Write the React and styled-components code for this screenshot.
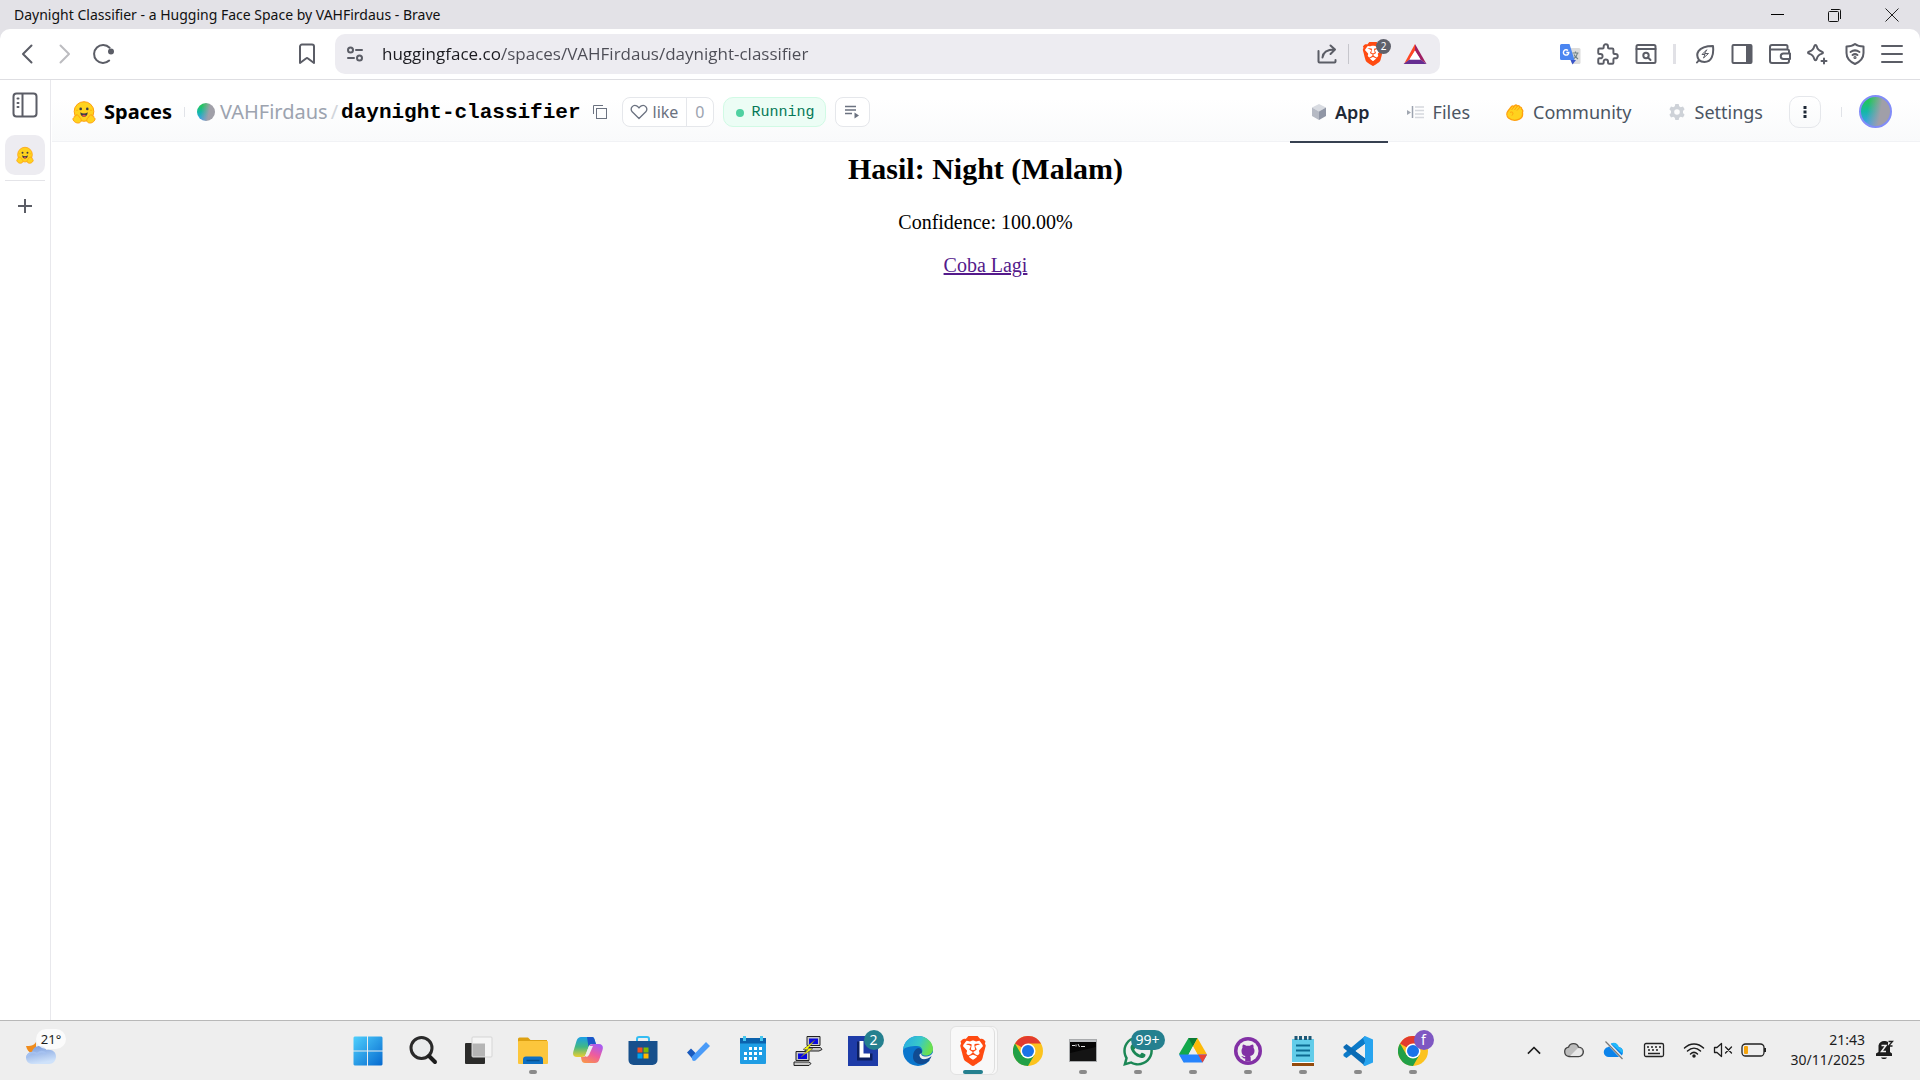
import React from 'react'
import styled, { createGlobalStyle, css } from 'styled-components'
import { SiBrave } from 'react-icons/si'
import { FaWhatsapp } from 'react-icons/fa'

const ui = `'Noto Sans', 'Open Sans', sans-serif`
const mono = `'Liberation Mono', monospace`

/* ---------- icons ---------- */

const Icon = ({ w, h = w, box, children, ...rest }) => (
  <svg
    width={w}
    height={h}
    viewBox={box || `0 0 ${w} ${h}`}
    fill='none'
    aria-hidden='true'
    {...rest}
  >
    {children}
  </svg>
)

const Line = ({ children, width = 2, ...rest }) => (
  <Icon
    stroke='currentColor'
    strokeWidth={width}
    strokeLinecap='round'
    strokeLinejoin='round'
    {...rest}
  >
    {children}
  </Icon>
)

const HuggingFace = ({ size }) => (
  <Icon w={size} box='0 0 24 24'>
    <circle cx='12' cy='11.5' r='9.8' fill='#ffd21e' stroke='#ff9d0b' />
    <path
      d='M1.2 20c-.7-1.2 0-2.2.9-2.3-.4-1.3.7-2.2 1.7-1.7 0-1.5 1.8-1.8 2.5-.4l1.9 2.4c1.8 1.6 1.3 4.5-1.5 5-2.3.3-4.4-.8-5.5-3z'
      fill='#ffd21e'
      stroke='#ff9d0b'
      strokeWidth='.9'
    />
    <path
      d='M22.8 20c.7-1.2 0-2.2-.9-2.3.4-1.3-.7-2.2-1.7-1.7 0-1.5-1.8-1.8-2.5-.4l-1.9 2.4c-1.8 1.6-1.3 4.5 1.5 5 2.3.3 4.4-.8 5.5-3z'
      fill='#ffd21e'
      stroke='#ff9d0b'
      strokeWidth='.9'
    />
    <circle cx='8.7' cy='8.9' r='1.3' fill='#3a3b45' />
    <circle cx='15.3' cy='8.9' r='1.3' fill='#3a3b45' />
    <circle cx='5' cy='10.3' r='.8' fill='#ffad03' />
    <circle cx='19' cy='10.3' r='.8' fill='#ffad03' />
    <path
      d='M8.3 12.3c2.3 1.7 5.1 1.7 7.4 0 0 3-1.5 4.4-3.7 4.4s-3.7-1.4-3.7-4.4z'
      fill='#3a3b45'
    />
    <path d='M10 15.6c1-1.3 3-1.3 4 0-1 1.4-3 1.4-4 0z' fill='#ef4e4e' />
  </Icon>
)

const Reload = () => (
  <Line w={24}>
    <path d='M18.2 18.6A9 9 0 1 1 18.6 5.8' />
    <circle cx='20' cy='9.5' r='2' fill='currentColor' />
  </Line>
)

const Bookmark = () => (
  <Line w={18} h={22}>
    <path d='M4 1.5h10a2 2 0 0 1 2 2V20l-6-4.500a1.5 1.5 0 0 0-2 0L2 20V3.500a2 2 0 0 1 2-2z' />
  </Line>
)

const SiteInfo = () => (
  <Line w={16}>
    <circle cx='3.5' cy='4' r='2.5' />
    <path d='M9 4h6M1 12h6' />
    <circle cx='12.5' cy='12' r='2.5' />
  </Line>
)

const Share = () => (
  <Line w={20}>
    <path d='M1.5 7v10.5a1 1 0 0 0 1 1h15a1 1 0 0 0 1-1V16' />
    <path d='M5.5 13.5c.5-5 4.500-8 12-8M13.5 1.5l4.5 4-4.5 4.5' />
  </Line>
)

const BraveLion = ({ size }) => (
  <Icon w={size} box='0 0 24 24'>
    <path d='M7 3h10l4 4-2 10-7 5-7-5L3 7z' fill='#fff' />
    <SiBrave size={24} color='#ff4b12' />
  </Icon>
)

const BatTriangle = () => (
  <Icon w={24} h={20}>
    <path d='M12 0v7l-5.5 8.5L1 20z' fill='#ff4724' />
    <path d='M12 0l11.5 20-6-4.5L12 7z' fill='#9e1f63' />
    <path d='M.5 20l6-4.5h11l6 4.5z' fill='#662d91' />
    <path d='M12 6.5l5.5 9h-11z' fill='#fff' />
  </Icon>
)

const Translate = () => (
  <Icon w={22}>
    <path d='M8 5h12a1.5 1.5 0 0 1 1.5 1.5v13A1.5 1.5 0 0 1 20 21h-7z' fill='#dcdcdc' />
    <path d='M11.5 17l2 4.5L17 17z' fill='#3a55c8' />
    <path
      d='M2.5 1h8l5 16h-13A1.5 1.5 0 0 1 1 15.500v-13A1.5 1.5 0 0 1 2.5 1z'
      fill='#4b86f1'
    />
    <path d='M9 7.500a2.700 2.700 0 1 0 .8 2H7.3' stroke='#fff' strokeWidth='1.4' />
    <path
      d='M13.5 10h6M16.5 8.500V10M18.5 10c-.5 3-2 4.5-3.5 5.5M15 11.500c1 2.500 2.500 3.500 4 4.500'
      stroke='#6f8286'
      strokeWidth='1.2'
    />
  </Icon>
)

const Puzzle = () => (
  <Line w={26} box='0 0 24 24' width='1.8'>
    <path d='M4 7h3a1 1 0 0 0 1-1V5a2 2 0 0 1 4 0v1a1 1 0 0 0 1 1h3a1 1 0 0 1 1 1v3a1 1 0 0 0 1 1h1a2 2 0 0 1 0 4h-1a1 1 0 0 0-1 1v3a1 1 0 0 1-1 1h-3a1 1 0 0 1-1-1v-1a2 2 0 0 0-4 0v1a1 1 0 0 1-1 1H4a1 1 0 0 1-1-1v-3a1 1 0 0 1 1-1h1a2 2 0 0 0 0-4H4a1 1 0 0 1-1-1V8a1 1 0 0 1 1-1' />
  </Line>
)

const PageSearch = () => (
  <Line w={22} h={20}>
    <rect x='1.5' y='1' width='19' height='18' rx='1.5' />
    <path d='M1.5 5h19M13 13.5l2.5 2.5' />
    <circle cx='11' cy='11.5' r='2.7' />
  </Line>
)

const Leaf = () => (
  <Line w={20}>
    <path d='M2 18.5L4 16C.5 11 1.500 2 18 2c1 9-1.5 16-8.5 16-2.500 0-4-.5-5.500-2z' />
    <path d='M11.5 6L7 10.500h3L8.500 14l5-4.500H10z' strokeWidth='1' />
  </Line>
)

const PanelRight = () => (
  <Icon w={22} h={20}>
    <rect x='1.5' y='1' width='19' height='18' rx='1' stroke='currentColor' strokeWidth='2' />
    <path d='M15 1h6v18h-6z' fill='currentColor' />
  </Icon>
)

const Wallet = () => (
  <Line w={22} h={20}>
    <path d='M18.5 4V2.500A1.500 1.500 0 0 0 17 1H3a2 2 0 0 0-2 2v14a2 2 0 0 0 2 2h15a2 2 0 0 0 2-2V7a1.500 1.500 0 0 0-1.500-1.500H1' />
    <path d='M21 9.500h-6.500a2.500 2.500 0 0 0 0 5.500H21z' fill='#fff' />
  </Line>
)

const Sparkle = () => (
  <Line w={22}>
    <path d='M9.5 2c.5 0 1 .5 1.2 1.3.8 3 1.6 4.300 4.800 5.200 2 .6 2 1.800 0 2.400-3.200.9-4 2.200-4.800 5.200-.4 1.600-2 1.600-2.400 0-.8-3-1.600-4.300-4.800-5.200-2-.6-2-1.800 0-2.400 3.200-.9 4-2.200 4.800-5.200C8.500 2.500 9 2 9.500 2z' />
    <path d='M18 15.500v5M15.500 18h5' />
  </Line>
)

const ShieldWifi = () => (
  <Line w={20} h={22}>
    <path d='M10 1c2.500 2 5 2.500 8.500 2.500V10c0 5-3 8.500-8.500 11C4.500 18.500 1.500 15 1.500 10V3.500C5 3.500 7.500 3 10 1z' />
    <path d='M5.500 9c2.800-2 6.200-2 9 0M7.500 12c1.700-1.200 3.300-1.200 5 0' />
    <circle cx='10' cy='14.5' r='.6' />
  </Line>
)

const SidebarToggle = () => (
  <Line w={26}>
    <rect x='1.5' y='1.5' width='23' height='23' rx='3' />
    <path d='M10.5 2v22M5.5 6.500h1M5.500 11h1M5.500 15h1' />
  </Line>
)

const Copy = () => (
  <Icon w={14} stroke='#6b7280'>
    <path d='M.5 9V.5H10' />
    <rect x='3.5' y='3.5' width='10' height='10' />
  </Icon>
)

const Heart = () => (
  <Line w={18} h={16} width='1.3'>
    <path d='M9 14.500L2.200 7.800C-.5 4.500 3 .2 6.700 1.800 7.800 2.300 8.400 3 9 4c.6-1 1.200-1.700 2.300-2.200C15 .2 18.500 4.500 15.800 7.800z' />
  </Line>
)

const ListPlay = () => (
  <Icon w={14}>
    <path d='M0 1.500h11M0 5h11M0 8.500h7' stroke='#6b7280' strokeWidth='1.5' />
    <path d='M9.500 7.500l4.500 3-4.500 3z' fill='#6b7280' />
  </Icon>
)

const Cube = () => (
  <Icon w={18}>
    <path d='M11 1l7 3.500-7 4-7-4z' fill='#d8dbe1' />
    <path d='M4 4.500l7 4V17l-7-4z' fill='#b6bac4' />
    <path d='M18 4.500l-7 4V17l7-4z' fill='#9096a5' />
  </Icon>
)

const FilesIcon = () => (
  <Icon w={18} h={14}>
    <path d='M1 5l4 2.500-4 2.500z' fill='#a0a6b0' />
    <path d='M6.500 1v12' stroke='#9ca3af' strokeWidth='1.5' />
    <path d='M9 2h9M9 5.500h9M9 9h9M9 12.500h9' stroke='#d5d8dd' strokeWidth='1.5' />
  </Icon>
)

const Clap = () => (
  <Icon w={18}>
    <path
      d='M2.500 15C.5 13 .3 10 2 8l3.500-4.500c1-1 2.200-.5 2.300.3l1-1.300c1.200-1 2.500-.3 2.400.7 1.200-1 2.700-.3 2.500 1.100 1.300-.4 2.300.6 1.800 1.900 1.400.5 1.600 2 .9 3.300.7 3.500-.3 5.500-3 6.700-3.500 1.500-8 1.300-10.900-1.200z'
      fill='#ffd21e'
      stroke='#ffa00f'
      strokeWidth='1.3'
    />
    <path
      d='M7.800 4L5.500 7M11 3.500L8.500 7M13.500 4.500L11 7.500M4 9.500c2.500-1.500 4 .5 2 3'
      stroke='#ffa00f'
    />
  </Icon>
)

const Gear = () => (
  <Icon w={18}>
    <path
      fillRule='evenodd'
      d='M7.300 1h3.400l.5 2.300 1.500.9L15 3.500l1.600 2.800L15 8v2l1.600 1.700L15 14.500l-2.300-.7-1.500.9-.5 2.300H7.300l-.5-2.300-1.500-.9-2.300.7-1.600-2.800L3 10V8L1.400 6.300 3 3.500l2.300.7 1.500-.9zM9 6.200a2.800 2.800 0 1 0 0 5.600 2.800 2.800 0 0 0 0-5.600z'
      fill='#ced2d8'
    />
  </Icon>
)

/* taskbar icons, all on a 30px grid */

const Windows = () => (
  <Icon w={30}>
    <defs>
      <linearGradient id='win' x1='0' y1='0' x2='1' y2='1'>
        <stop stopColor='#4fd0fd' />
        <stop offset='1' stopColor='#0669cf' />
      </linearGradient>
    </defs>
    <path
      d='M1.500.5H14v14H.5v-13zM15 .5h13.500l1 1v13H15zM.5 15.500H14v14H1.500l-1-1zM15 15.500h14.500v13l-1 1H15z'
      fill='url(#win)'
    />
  </Icon>
)

const Search = () => (
  <Icon w={30}>
    <circle cx='13.5' cy='12' r='10.5' stroke='#2a2a2a' strokeWidth='3' fill='#e9ebec' />
    <path d='M21 20l6 6' stroke='#1d1d1d' strokeWidth='4' strokeLinecap='round' />
  </Icon>
)

const TaskView = () => (
  <Icon w={30}>
    <rect x='2' y='7' width='20' height='21' rx='1' fill='#2b2b2a' />
    <rect x='9' y='1' width='20' height='20' rx='1' fill='#f5f5f5' stroke='#d5d5d5' />
    <path d='M9.500 7.500H22v13H9.500z' fill='#b5b5b5' />
  </Icon>
)

const Explorer = () => (
  <Icon w={30}>
    <path d='M0 3a1.500 1.500 0 0 1 1.500-1.500H10L12.500 4H29v8H0z' fill='#dda112' />
    <rect y='5' width='30' height='23' rx='1' fill='#fcc63c' />
    <path d='M5 28v-4.500a3 3 0 0 1 3-3h14a3 3 0 0 1 3 3V28z' fill='#0e70c4' />
    <path d='M8.500 24.500h13' stroke='#07508f' strokeWidth='1.5' />
  </Icon>
)

const Copilot = () => (
  <Icon w={30}>
    <defs>
      <linearGradient id='cop1' x1='0' y1='0' x2='0' y2='1'>
        <stop stopColor='#1a9fe8' />
        <stop offset='.5' stopColor='#42b883' />
        <stop offset='1' stopColor='#ecce31' />
      </linearGradient>
      <linearGradient id='cop2' x1='.7' y1='0' x2='.2' y2='1'>
        <stop stopColor='#a95cf0' />
        <stop offset='.5' stopColor='#ef5c9d' />
        <stop offset='1' stopColor='#f9954b' />
      </linearGradient>
    </defs>
    <path
      d='M8 1h11c2 0 2.500 2 3 4l1 3h-4c-2 0-3 1-3.500 3L13 18c-.6 2-1.800 3-4 3H4c-4 0-4.500-3-3.500-6l3-10C4.500 2 6 1 8 1z'
      fill='url(#cop1)'
    />
    <path d='M14 1h5c2 0 2.500 2 3 4l1 3h-4c-2 0-3 1-3.500 3z' fill='#1b56c9' />
    <path
      d='M22 27H12c-2 0-3-1-3.500-3L8 21h2c2 0 3-1 3.500-3L16 11c.6-2 2-3 4-3h6c3.500 0 4.500 3 3.500 6l-3 9c-1 3-2.500 4-4.500 4z'
      fill='url(#cop2)'
    />
    <path d='M12 20l4-10h4l-4 9-2 2z' fill='#eee' />
  </Icon>
)

const Store = () => (
  <Icon w={30}>
    <path d='M9 6V3a2 2 0 0 1 2-2h8a2 2 0 0 1 2 2v3' stroke='#35bdf2' strokeWidth='2' />
    <path d='M.5 5h29v19a5 5 0 0 1-5 5h-19a5 5 0 0 1-5-5z' fill='#17508c' />
    <path d='M9.500 11.500h5v5h-5z' fill='#f25022' />
    <path d='M15.500 11.500h5v5h-5z' fill='#7fba00' />
    <path d='M9.500 17.500h5v5h-5z' fill='#00a4ef' />
    <path d='M15.500 17.500h5v5h-5z' fill='#ffb900' />
  </Icon>
)

const Todo = () => (
  <Icon w={30}>
    <path d='M4 16.500l4-4 7 7-4.500 4.500z' fill='#195abd' />
    <path d='M8.500 21L23 6l4 4-14.500 14.500c-1 .5-2 .5-3 0z' fill='#4a9bf8' />
  </Icon>
)

const Calendar = () => (
  <Icon w={30}>
    <rect x='2' y='2' width='26' height='26' rx='1' fill='#1f9de4' />
    <path d='M2 2h26v5.500H2z' fill='#0b62ad' />
    <path d='M6.500 0v5M23.500 0v5' stroke='#45c6ef' strokeWidth='3' />
    <path
      d='M11 12.500h13M6 17.500h18M6 22.500h13'
      stroke='#fff'
      strokeWidth='3'
      strokeDasharray='3 2'
    />
  </Icon>
)

const Putty = () => (
  <Icon w={30}>
    <g stroke='#222'>
      <path d='M14 .5h13v9H14zM12.500 11.500h15l1.500 2-3 1.500H12z' fill='#c7c7c7' />
      <path d='M3 15.500h13v9H3zM1 26h15l2 1.500-2 2H1z' fill='#c7c7c7' />
    </g>
    <path d='M16 2.500h9V8h-9zM5 17.500h9V23H5z' fill='#0a0ae0' />
    <path
      d='M22 4L10 13.500h5L8 21l12-8.500h-5z'
      fill='#ff0'
      stroke='#555'
      strokeWidth='.6'
    />
  </Icon>
)

const LApp = () => (
  <Icon w={30}>
    <path d='M0 0h30v30H0z' fill='#1e3ca8' />
    <path d='M12 5.500v16h9.500v-4' stroke='#0c1f60' strokeWidth='6' />
    <path d='M13.500 5v14.500H22' stroke='#fff' strokeWidth='4' />
  </Icon>
)

const Edge = () => (
  <Icon w={30}>
    <defs>
      <linearGradient id='edge1' x1='0' y1='0' x2='1' y2='.3'>
        <stop stopColor='#26a8e6' />
        <stop offset='.6' stopColor='#38c9c9' />
        <stop offset='1' stopColor='#6be04f' />
      </linearGradient>
    </defs>
    <circle cx='15' cy='15' r='15' fill='#0b76cd' />
    <path
      d='M0 14C1 5 7 0 15 0c8.500 0 15 6 15 13 0 4-3 6.500-7 6.500-3.500 0-5-1.500-4-3 1.500-3-1-6.500-5-6.500C7.500 10 2 11 0 14z'
      fill='url(#edge1)'
    />
    <path
      d='M10 21c0-6 3.500-9 6-9 2.500 1 3.500 3 2.500 5-1 2 1 3.500 4.500 3.500 2 0 4-.5 5.500-1.500.5 1-1 4-3 6-6 6-15.500 3-15.500-4z'
      fill='#114b92'
    />
    <path
      d='M18.500 17c-1 2 1 3.500 4.500 3.500 3 0 5.500-1.500 7-4V24h-5c-6 1-9-3-8.500-5.500z'
      fill='#eee'
    />
    <path d='M28.500 20c-.5 2-2 4-3.500 5.500-4 2-11-1-9-5 1.500 4 8 3.500 12.500-.5z' fill='#114b92' />
  </Icon>
)

const Chrome = () => (
  <Icon w={30}>
    <circle cx='15' cy='15' r='15' fill='#fcc31e' />
    <path d='M15 15L2 7.500A15 15 0 0 1 28 7.500z' fill='#e33b2e' />
    <path d='M15 7.500h13L21.500 15z' fill='#fcc31e' />
    <path d='M2 7.500A15 15 0 0 0 15 30l6.500-11.200h-13z' fill='#21a047' />
    <circle cx='15' cy='15' r='7.5' fill='#fff' />
    <circle cx='15' cy='15' r='6' fill='#1a73e8' />
  </Icon>
)

const Terminal = () => (
  <Icon w={30}>
    <rect x='1.5' y='3.5' width='27' height='22' fill='#060606' stroke='#a9abad' />
    <path d='M2 4h26v2H2z' fill='#bfc2c5' />
    <path d='M4 9.500h3M8 8.500v2M10 8l1.500 3M13 10.500h4' stroke='#ddd' />
    <path d='M2 17l26-6v14H2z' fill='#222' opacity='.5' />
  </Icon>
)

const Drive = () => (
  <Icon w={30}>
    <path d='M10.500 2h9L15 10 6.500 26.500 1 18z' fill='#12a84b' />
    <path d='M10.500 2h9L15 10.500z' fill='#0b7a35' />
    <path d='M19.500 2L29 18.500h-9.500L15 10.500z' fill='#fdba08' />
    <path d='M15 10.500l4.500 8h-9z' fill='#eee' />
    <path d='M1 18.500h28l-4.500 8h-19z' fill='#2684fc' />
    <path d='M20 18.500h9l-4.500 8z' fill='#ea4335' />
  </Icon>
)

const GithubDesktop = () => (
  <Icon w={30}>
    <circle cx='15' cy='15' r='14' fill='#8230a5' />
    <circle cx='15' cy='15' r='10.5' fill='#eee' />
    <path
      d='M8.500 15c0-1.500.4-2.500 1-3.300-.2-1.200 0-2.500.5-3.200 1.500.1 2.500.8 3 1.200h4c.5-.4 1.500-1.100 3-1.200.5.7.7 2 .5 3.200.6.8 1 1.800 1 3.300 0 3-2 4.500-4.500 5 .7.6.8 1.500.8 5.500h-5.600v-3c-2.500.5-2.500-1.500-4-2.500 2-.3 2 1.200 4 1v-1C10 19.500 8.500 18 8.500 15z'
      fill='#8230a5'
    />
  </Icon>
)

const Notepad = () => (
  <Icon w={30}>
    <path d='M4 27h22v3H4z' fill='#944a0c' />
    <path d='M4 25h22v2H4z' fill='#fff' />
    <path d='M4 3h22v23H4z' fill='#62cce9' />
    <path d='M8 9.500h14M8 14.500h14M8 19.500h14' stroke='#0c6a92' strokeWidth='2' />
    <path d='M8 0v4M12.500 0v4M17.500 0v4M22 0v4' stroke='#1e5876' strokeWidth='3' />
  </Icon>
)

const VsCode = () => (
  <Icon w={30}>
    <path d='M22 8L3.500 22 .5 20v-2L22 0z' fill='#0b7ac8' />
    <path d='M22 22L3.500 8l-3 2.500V12L22 30z' fill='#0a6bb5' />
    <path d='M22 0l8 3.500v23L22 30l-2-1 2-4V7.500L20 2z' fill='#27a4ef' />
    <path d='M22 8v14l-9.500-7z' fill='#eee' />
  </Icon>
)

const Weather = () => (
  <Icon w={34} h={30}>
    <defs>
      <linearGradient id='cloud' x1='0' y1='0' x2='.3' y2='1'>
        <stop stopColor='#7397db' />
        <stop offset='1' stopColor='#cfe2fa' />
      </linearGradient>
    </defs>
    <path d='M1 8c4 0 8 0 10-4v11H6c-2-1-4-3-5-7z' fill='#f08c1c' />
    <path
      d='M7 26a6 6 0 0 1 0-12c1-4 4-6 8-6 3 0 5 1.500 6.500 4C27 11 31 14 31 18.500c0 4.500-3 7.500-7 7.500z'
      fill='url(#cloud)'
    />
    <path d='M2 20a6 6 0 0 1 10-4c3-3 7-3 9 0' stroke='#a5c1f0' strokeWidth='2' />
  </Icon>
)

const Chevron = () => (
  <Line w={16} h={10} width='1.7' strokeLinecap='square'>
    <path d='M2.500 8L8 2.500 13.500 8' />
  </Line>
)

const Cloud = () => (
  <Icon w={22} h={16}>
    <path
      d='M6 14.500a4.700 4.700 0 0 1-.5-9.300C7 .5 14 .3 15.500 5.200c6.500 0 6.500 9.300 0 9.300z'
      fill='#bdbdbd'
      stroke='#444'
      strokeWidth='1.3'
    />
    <path d='M7 14l8-8c5.500.5 5.500 8 0 8z' fill='#e8e8e8' />
  </Icon>
)

const OneDrive = () => (
  <Icon w={22} h={20}>
    <path d='M6 17a5 5 0 0 1-.5-10C7 1.500 14 1.500 15.500 7c6 0 6 10 0 10z' fill='#0c83ea' />
    <path d='M8 3.500c3-2 7-.5 8 4 4 .5 4.500 4 3.500 6z' fill='#22b8fa' />
    <path d='M3 1l17 18' stroke='#eee' strokeWidth='3' />
    <path d='M2.500 1.500L19.500 19' stroke='#777' strokeWidth='1.2' />
  </Icon>
)

const Keyboard = () => (
  <Icon w={22} h={16} stroke='#222'>
    <rect x='1.5' y='1.5' width='19' height='13' rx='1.5' strokeWidth='1.3' />
    <path d='M4 5h14M5 8h12' strokeWidth='1.5' strokeDasharray='2 2' />
    <path d='M5 11.500h12' strokeWidth='1.5' />
  </Icon>
)

const Wifi = () => (
  <Line w={22} h={16} width='1.5'>
    <path d='M1.500 6c5.500-5.500 13.500-5.500 19 0M4.500 9c4-3.700 9-3.700 13 0M7.500 12c2.200-2 4.800-2 7 0' />
    <circle cx='11' cy='14' r='1' fill='currentColor' />
  </Line>
)

const Muted = () => (
  <Line w={20} h={16} width='1.3'>
    <path d='M1.500 5.500H4l4.500-4v13L4 10.500H1.500zM12.500 5l6 6M18.500 5l-6 6' />
  </Line>
)

const Battery = () => (
  <Icon w={26} h={14}>
    <rect x='1' y='1' width='22' height='12' rx='3.5' stroke='#222' strokeWidth='1.3' />
    <rect x='3' y='3' width='4' height='8' rx='1' fill='#f5a40c' />
    <path d='M24 5v4' stroke='#222' strokeWidth='2' />
  </Icon>
)

const Bell = () => (
  <Icon w={20}>
    <path
      d='M3.500 5.500C4 2.500 6.500 1 9 1c1.500 0 3 .3 4 1v4h2v6l2 1.500V16H1v-2.500L3.500 12zM6 17.500h6c-1 2-5 2-6 0z'
      fill='#1d1d1d'
    />
    <path d='M6.500 5.500H11l-4.500 6H11' stroke='#eee' strokeWidth='1.5' />
    <path d='M13.500 1.500h4L13.500 6h4' stroke='#1d1d1d' strokeWidth='1.3' />
  </Icon>
)

/* ---------- data ---------- */

const tabs = [
  { label: 'App', icon: <Cube />, active: true },
  { label: 'Files', icon: <FilesIcon /> },
  { label: 'Community', icon: <Clap /> },
  { label: 'Settings', icon: <Gear /> },
]

const tools = [
  { label: 'Energy saver', icon: <Leaf /> },
  { label: 'Side panel', icon: <PanelRight /> },
  { label: 'Wallet', icon: <Wallet /> },
  { label: 'Leo AI', icon: <Sparkle /> },
  { label: 'VPN', icon: <ShieldWifi /> },
  {
    label: 'Menu',
    icon: (
      <Line w={22} h={20}>
        <path d='M1 2h20M1 10h20M1 18h20' />
      </Line>
    ),
  },
]

const apps = [
  { label: 'Start', icon: <Windows /> },
  { label: 'Search', icon: <Search /> },
  { label: 'Task view', icon: <TaskView /> },
  { label: 'File Explorer', icon: <Explorer />, running: true },
  { label: 'Copilot', icon: <Copilot /> },
  { label: 'Store', icon: <Store /> },
  { label: 'To Do', icon: <Todo /> },
  { label: 'Calendar', icon: <Calendar /> },
  { label: 'PuTTY', icon: <Putty /> },
  { label: 'L', icon: <LApp />, badge: '2' },
  { label: 'Edge', icon: <Edge /> },
  { label: 'Brave', icon: <BraveLion size={30} />, running: true, active: true },
  { label: 'Chrome', icon: <Chrome /> },
  { label: 'Terminal', icon: <Terminal />, running: true },
  {
    label: 'WhatsApp',
    icon: <FaWhatsapp size={34} color='#1b8755' />,
    running: true,
    badge: '99+',
  },
  { label: 'Google Drive', icon: <Drive />, running: true },
  { label: 'GitHub Desktop', icon: <GithubDesktop />, running: true },
  { label: 'Notepad', icon: <Notepad />, running: true },
  { label: 'VS Code', icon: <VsCode />, running: true },
  { label: 'Chrome profile', icon: <Chrome />, running: true, badge: 'f', purple: true },
]

/* ---------- sections ---------- */

const Browser = () => (
  <>
    <TitleBar>
      <WindowTitle>
        Daynight Classifier - a Hugging Face Space by VAHFirdaus - Brave
      </WindowTitle>
      <WindowButton aria-label='Minimize'>
        <Icon w={14} stroke='#000'>
          <path d='M0 6.500h13' />
        </Icon>
      </WindowButton>
      <WindowButton aria-label='Restore'>
        <Icon w={14} stroke='#111'>
          <rect x='.5' y='3.5' width='10' height='10' rx='1' />
          <path d='M3 1.500h8.500a1 1 0 0 1 1 1V11' />
        </Icon>
      </WindowButton>
      <WindowButton aria-label='Close'>
        <Icon w={14} stroke='#222'>
          <path d='M.5.5l13 13M13.500.5l-13 13' />
        </Icon>
      </WindowButton>
    </TitleBar>
    <ToolbarBack>
      <Toolbar>
        <ToolButton aria-label='Back'>
          <Line w={12} h={20}>
            <path d='M10.500 1.500L2 10l8.500 8.500' />
          </Line>
        </ToolButton>
        <ToolButton aria-label='Forward' disabled>
          <Line w={12} h={20}>
            <path d='M1.500 1.500L10 10l-8.500 8.500' />
          </Line>
        </ToolButton>
        <ToolButton aria-label='Reload'>
          <Reload />
        </ToolButton>
        <BookmarkButton aria-label='Bookmark'>
          <Bookmark />
        </BookmarkButton>
        <AddressBar>
          <ToolButton aria-label='Site information'>
            <SiteInfo />
          </ToolButton>
          <AddressInput
            type='text'
            aria-label='Address'
            defaultValue='huggingface.co/spaces/VAHFirdaus/daynight-classifier'
          />
          <ToolButton aria-label='Share'>
            <Share />
          </ToolButton>
          <Separator />
          <ShieldButton aria-label='Brave Shields'>
            <BraveLion size={24} />
            <ShieldCount>2</ShieldCount>
          </ShieldButton>
          <ToolButton aria-label='Rewards'>
            <BatTriangle />
          </ToolButton>
        </AddressBar>
        <Extensions>
          <ToolButton aria-label='Translate'>
            <Translate />
          </ToolButton>
          <ToolButton aria-label='Extensions'>
            <Puzzle />
          </ToolButton>
          <ToolButton aria-label='Find in page'>
            <PageSearch />
          </ToolButton>
        </Extensions>
        <Separator $thick />
        <Tools>
          {tools.map(tool => (
            <ToolButton key={tool.label} aria-label={tool.label}>
              {tool.icon}
            </ToolButton>
          ))}
        </Tools>
      </Toolbar>
    </ToolbarBack>
  </>
)

const SpaceHeader = () => (
  <Header>
    <HomeLink href='#spaces'>
      <HuggingFace size={24} />
      Spaces
    </HomeLink>
    <Divider />
    <Avatar />
    <OwnerLink href='#owner'>VAHFirdaus</OwnerLink>
    <Slash>/</Slash>
    <RepoLink href='#repo'>daynight-classifier</RepoLink>
    <CopyButton aria-label='Copy name'>
      <Copy />
    </CopyButton>
    <LikeGroup>
      <LikeButton>
        <Heart />
        like
      </LikeButton>
      <LikeCount>0</LikeCount>
    </LikeGroup>
    <Status>Running</Status>
    <ListButton aria-label='Add to collection'>
      <ListPlay />
    </ListButton>
    <Tabs>
      {tabs.map(tab => (
        <Tab key={tab.label} href={`#${tab.label}`} $active={tab.active}>
          {tab.icon}
          {tab.label}
        </Tab>
      ))}
    </Tabs>
    <MoreButton aria-label='More'>
      <Icon w={4} h={14}>
        <path d='M.5 1h3v3h-3zM.5 5.500h3v3h-3zM.5 10h3v3h-3z' fill='#1f2937' />
      </Icon>
    </MoreButton>
    <Divider />
    <ProfileButton aria-label='Profile' />
  </Header>
)

const Taskbar = () => (
  <Bar>
    <WeatherButton aria-label='Weather'>
      <Weather />
      <Temperature>21°</Temperature>
    </WeatherButton>
    <Apps>
      {apps.map(app => (
        <AppButton key={app.label} aria-label={app.label}>
          {app.active && <ActiveTile />}
          <AppIcon>
            {app.icon}
            {app.badge && <Badge $purple={app.purple}>{app.badge}</Badge>}
          </AppIcon>
          {app.running && <Indicator $active={app.active} />}
        </AppButton>
      ))}
    </Apps>
    <Tray>
      <TrayButton aria-label='Show hidden icons'>
        <Chevron />
      </TrayButton>
      <TrayButton aria-label='Cloud'>
        <Cloud />
      </TrayButton>
      <TrayButton aria-label='OneDrive'>
        <OneDrive />
      </TrayButton>
      <TrayButton aria-label='Touch keyboard'>
        <Keyboard />
      </TrayButton>
      <QuickSettings aria-label='Quick settings'>
        <Wifi />
        <Muted />
        <Battery />
      </QuickSettings>
      <Clock>
        <time>21:43</time>
        <time>30/11/2025</time>
      </Clock>
      <Bell />
    </Tray>
  </Bar>
)

const App = () => (
  <Screen>
    <GlobalStyle />
    <Browser />
    <Body>
      <Sidebar>
        <ToolButton aria-label='Toggle sidebar'>
          <SidebarToggle />
        </ToolButton>
        <PageTab aria-label='Daynight Classifier'>
          <HuggingFace size={18} />
        </PageTab>
        <NewTab aria-label='New tab'>
          <Icon w={14} stroke='#5b5d66' strokeWidth='2'>
            <path d='M7 0v14M0 7h14' />
          </Icon>
        </NewTab>
      </Sidebar>
      <Content>
        <SpaceHeader />
        <Result>
          <h2>Hasil: Night (Malam)</h2>
          <p>Confidence: 100.00%</p>
          <a href='#'>Coba Lagi</a>
        </Result>
      </Content>
    </Body>
    <Taskbar />
  </Screen>
)

export default App

/* ---------- styles ---------- */

const GlobalStyle = createGlobalStyle`
  * {
    box-sizing: border-box;
  }

  body {
    margin: 0;
    background: #fff;
    font-family: ${ui};
  }

  button {
    padding: 0;
    border: 0;
    background: none;
    font: inherit;
    color: inherit;
  }

  a {
    color: inherit;
    text-decoration: none;
  }

  svg {
    flex-shrink: 0;
  }
`

const center = css`
  display: flex;
  align-items: center;
  justify-content: center;
`

const Screen = styled.div`
  display: flex;
  flex-direction: column;
  min-height: 100vh;
`

const TitleBar = styled.header`
  display: flex;
  align-items: center;
  height: 29px;
  background: #e3e2e7;
`

const WindowTitle = styled.div`
  flex: 1;
  padding-left: 14px;
  font-size: 14px;
  line-height: 20px;
  color: #111;
`

const WindowButton = styled.button`
  ${center};
  width: 57px;
  height: 29px;
`

const ToolbarBack = styled.div`
  background: #e3e2e7;
`

const Toolbar = styled.div`
  display: flex;
  align-items: center;
  height: 51px;
  padding: 0 9px 0 8px;
  background: #fff;
  border-bottom: 1px solid #dedee2;
  border-radius: 10px 10px 0 0;
`

const ToolButton = styled.button`
  ${center};
  width: 38px;
  height: 38px;
  color: #5b5d66;

  &:disabled {
    color: #bcbcc0;
  }
`

const BookmarkButton = styled(ToolButton)`
  margin: 0 9px 0 166px;
`

const AddressBar = styled.div`
  display: flex;
  flex: 1;
  align-items: center;
  height: 40px;
  padding: 0 6px 0 1px;
  background: #edecf1;
  border-radius: 10px;
`

const AddressInput = styled.input`
  flex: 1;
  min-width: 0;
  margin-left: 8px;
  padding: 0;
  border: 0;
  outline: 0;
  background: linear-gradient(to right, #1b1b20 120px, #4c4c55 120px);
  background-clip: text;
  -webkit-text-fill-color: transparent;
  font: 17px/24px 'Open Sans', sans-serif;
`

const Separator = styled.span`
  width: ${props => (props.$thick ? '3px' : '1px')};
  height: 20px;
  margin: ${props => (props.$thick ? '0 10px 0 8px' : '0 5px 0 2px')};
  background: ${props => (props.$thick ? '#e1e1e6' : '#c6c6cc')};
`

const ShieldButton = styled(ToolButton)`
  position: relative;
  margin-right: 4px;
`

const ShieldCount = styled.span`
  position: absolute;
  top: 4px;
  right: 1px;
  width: 15px;
  height: 15px;
  border-radius: 8px;
  background: #5f616b;
  color: #fff;
  font-size: 10px;
  line-height: 15px;
  text-align: center;
`

const Extensions = styled.div`
  display: flex;
  margin-left: 111px;
`

const Tools = styled.div`
  display: flex;
  width: 225px;

  ${ToolButton} {
    flex: 1;
  }
`

const Body = styled.div`
  display: flex;
  flex: 1;
`

const Sidebar = styled.nav`
  display: flex;
  flex-direction: column;
  align-items: center;
  width: 51px;
  padding-top: 6px;
  border-right: 1px solid #e8e8ec;
`

const PageTab = styled.button`
  ${center};
  width: 40px;
  height: 40px;
  margin: 11px 0 5px;
  border-radius: 10px;
  background: #edecf1;
`

const NewTab = styled.button`
  ${center};
  width: 40px;
  height: 51px;
  border-top: 1px solid #e4e4e8;
`

const Content = styled.main`
  flex: 1;
  min-width: 0;
`

const Header = styled.div`
  display: flex;
  align-items: center;
  height: 62px;
  padding: 2px 28px 0 20px;
  margin-left: 1px;
  background: linear-gradient(#fff 30%, #f9fafb);
  border-bottom: 1px solid #f1f2f5;
`

const HomeLink = styled.a`
  display: flex;
  align-items: center;
  gap: 8px;
  font-size: 20px;
  font-weight: 700;
  color: #000;
`

const Divider = styled.span`
  width: 1px;
  height: 10px;
  margin: 0 12px;
  background: #e1e3e8;
`

const gradient = css`
  border-radius: 50%;
  background: linear-gradient(100deg, transparent 25%, #a09fa8 65%),
    linear-gradient(#22c55e 15%, #14b8a6 50%, #3f9df0 95%);
`

const Avatar = styled.span`
  ${gradient};
  width: 18px;
  height: 18px;
`

const OwnerLink = styled.a`
  margin-left: 5px;
  font-size: 20px;
  color: #9ca3af;
`

const Slash = styled.span`
  margin: 0 3px;
  font-size: 20px;
  color: #d1d5db;
`

const RepoLink = styled.a`
  padding-top: 3px;
  font: 700 21px/28px ${mono};
  color: #000;
`

const CopyButton = styled.button`
  ${center};
  width: 14px;
  height: 24px;
  margin: 0 15px 0 12px;
`

const chip = css`
  display: flex;
  align-items: center;
  height: 30px;
  border: 1px solid #e5e7eb;
  border-radius: 8px;
`

const LikeGroup = styled.div`
  ${chip};
  background: #fff;
  font-size: 16px;
  color: #6b7280;
`

const LikeButton = styled.button`
  display: flex;
  align-items: center;
  gap: 5px;
  height: 28px;
  padding: 0 8px 0 7px;
  border-right: 1px solid #e5e7eb;
`

const LikeCount = styled.span`
  padding: 0 8px;
  color: #9ca3af;
`

const Status = styled.span`
  ${chip};
  gap: 8px;
  margin: 0 9px;
  padding: 2px 10px 0 12px;
  border-color: #d1fae5;
  border-radius: 10px;
  background: #ecfdf5;
  font: 15px/20px ${mono};
  color: #047857;

  &::before {
    content: '';
    width: 8px;
    height: 8px;
    border-radius: 50%;
    background: #4fd1a1;
  }
`

const ListButton = styled.button`
  ${chip};
  justify-content: center;
  width: 35px;
  border: 1px solid #e5e7eb;
  background: #fff;
`

const Tabs = styled.nav`
  display: flex;
  align-self: stretch;
  margin-left: auto;
`

const Tab = styled.a`
  display: flex;
  align-items: center;
  gap: 9px;
  height: 61px;
  padding: 0 18px;
  border-bottom: 2px solid ${props => (props.$active ? '#374151' : 'transparent')};
  font-size: 18px;
  font-weight: ${props => (props.$active ? 600 : 400)};
  color: ${props => (props.$active ? '#1f2937' : '#4b5563')};
`

const MoreButton = styled.button`
  ${center};
  width: 32px;
  height: 32px;
  margin: 0 8px;
  border: 1px solid #e5e7eb;
  border-radius: 10px;
  background: linear-gradient(#fff, #f9fafb);
`

const ProfileButton = styled.button`
  ${gradient};
  width: 33px;
  height: 33px;
  margin-left: 5px;
  border: 2px solid #818cf8;
`

const Result = styled.section`
  padding: 10px;
  font: 20px/23px 'Liberation Serif', serif;
  text-align: center;
  color: #000;

  h2 {
    margin: 0 0 25px;
    font-size: 30px;
    line-height: 34px;
  }

  p {
    margin: 0 0 20px;
  }

  a {
    color: #551a8b;
    text-decoration: underline;
  }
`

const Bar = styled.footer`
  display: flex;
  height: 60px;
  border-top: 1px solid #b8b8b8;
  background: #eee;
  color: #1d1d1d;
`

const WeatherButton = styled.button`
  position: relative;
  display: flex;
  width: 340px;
  padding: 17px 0 0 25px;
`

const Temperature = styled.span`
  position: absolute;
  top: 8px;
  left: 36px;
  width: 30px;
  border-radius: 10px;
  background: rgba(255, 255, 255, 0.75);
  font-size: 13px;
  line-height: 20px;
  text-align: center;
`

const Apps = styled.div`
  display: flex;
`

const AppButton = styled.button`
  position: relative;
  display: flex;
  flex-direction: column;
  align-items: center;
  gap: 4px;
  width: 55px;
  padding-top: 15px;
`

const AppIcon = styled.span`
  ${center};
  position: relative;
  width: 30px;
  height: 30px;
`

const ActiveTile = styled.span`
  position: absolute;
  top: 5px;
  left: 5px;
  width: 48px;
  height: 49px;
  border: 1px solid #e2e2e2;
  border-radius: 6px;
  background: #f8f8f8;

  &::after {
    content: '';
    display: block;
    width: 43px;
    height: 47px;
    border-right: 1px solid #dedede;
    border-radius: 6px;
  }
`

const Indicator = styled.span`
  position: relative;
  width: ${props => (props.$active ? '20px' : '8px')};
  height: 4px;
  border-radius: 2px;
  background: ${props => (props.$active ? '#25808f' : '#8a8a8a')};
`

const Badge = styled.span`
  position: absolute;
  top: -6px;
  left: ${props => (props.children.length > 1 ? '8px' : '16px')};
  min-width: 20px;
  height: 20px;
  padding: 0 5px;
  border-radius: 10px;
  background: ${props => (props.$purple ? '#7e57c2' : '#25808f')};
  color: #fff;
  font-size: 14px;
  line-height: 20px;
  text-align: center;
`

const Tray = styled.div`
  display: flex;
  align-items: center;
  margin-left: auto;
  padding: 0 25px 2px 0;
`

const TrayButton = styled.button`
  ${center};
  width: 40px;
  height: 40px;
`

const QuickSettings = styled.button`
  display: flex;
  align-items: center;
  gap: 8px;
  padding: 0 24px 0 9px;
`

const Clock = styled.div`
  display: flex;
  flex-direction: column;
  align-items: flex-end;
  margin-right: 10px;
  font-size: 14px;
  line-height: 20px;
`
